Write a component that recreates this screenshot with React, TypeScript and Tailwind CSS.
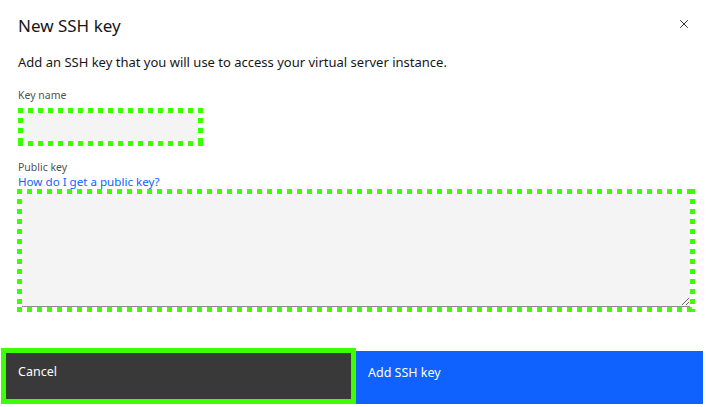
import { X } from "lucide-react";

// focus-ring look from the screenshot: square green dashes round a box
const dashes =
  "[background:repeating-linear-gradient(90deg,#3cff00_0_5px,transparent_5px_10px)_top/100%_5px_no-repeat,repeating-linear-gradient(90deg,#3cff00_0_5px,transparent_5px_10px)_bottom/100%_5px_no-repeat,repeating-linear-gradient(180deg,#3cff00_0_5px,transparent_5px_10px)_left/5px_100%_no-repeat,repeating-linear-gradient(180deg,#3cff00_0_5px,transparent_5px_10px)_right/5px_100%_no-repeat]";

export default function App() {
  return (
    <div
      className="w-[706px] h-[407px] bg-white flex flex-col text-[#161616] overflow-hidden"
      style={{ fontFamily: '"Noto Sans", "Liberation Sans", sans-serif' }}
    >
      <div className="flex items-start justify-between pl-[18px] pr-[13px] pt-[14px]">
        <h2 className="text-[17px] leading-[24px]">New SSH key</h2>
        <button className="mt-[1px] p-[2px] text-[#161616]">
          <X size={14} strokeWidth={1.5} />
        </button>
      </div>

      <p className="pl-[18px] mt-[15px] text-[13px] leading-[18px]">
        Add an SSH key that you will use to access your virtual server instance.
      </p>

      <div className="pl-[18px] mt-[17px] flex flex-col">
        <label className="text-[10.5px] leading-[14px] text-[#525252]">Key name</label>
        <div className={`mt-[6px] w-[185px] h-[38px] p-[5px] ${dashes}`}>
          <input className="w-full h-full bg-[#f4f4f4] outline-none" />
        </div>
      </div>

      <div className="pl-[17px] pr-[11px] mt-[14px] flex flex-col">
        <label className="pl-px text-[10.5px] leading-[14px] text-[#525252]">Public key</label>
        <a className="pl-px text-[11.6px] leading-[16px] text-[#0f62fe]">How do I get a public key?</a>
        <div className={`mt-[-1px] h-[123px] p-[5px] flex ${dashes}`}>
          <textarea className="flex-1 bg-[#f4f4f4] border-b border-[#8d8d8d] outline-none" />
        </div>
      </div>

      <div className="mt-auto flex items-end h-[56px] mb-[3px] w-[703px]">
        <button className="ml-[1px] w-[355px] h-[56px] border-[5px] border-[#3cff00] bg-[#393939] text-white text-[12.5px] text-left pl-[12px] pb-[8px]">
          Cancel
        </button>
        <button className="flex-1 h-[53px] bg-[#0f62fe] text-white text-[12.5px] text-left pl-[12px] pb-[8px]">
          Add SSH key
        </button>
      </div>
    </div>
  );
}
